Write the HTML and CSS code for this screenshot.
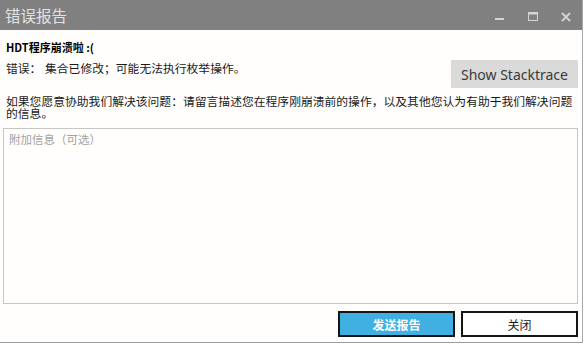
FILE: index.html
```html
<!DOCTYPE html>
<html lang="zh-CN">
<head>
    <meta charset="UTF-8">
    <meta name="viewport" content="width=device-width, initial-scale=1.0">
    <title>错误报告</title>
    <link rel="stylesheet" href="styles.css">
</head>
<body>
    <div class="window">
        <div class="titlebar">
            <span class="title">错误报告</span>
            <div class="controls">
                <span class="ctrl">
                    <svg width="10" height="10" viewBox="0 0 10 10"><rect x="0" y="6" width="9" height="2" fill="#d4d4d4"/></svg>
                </span>
                <span class="ctrl">
                    <svg width="10" height="10" viewBox="0 0 10 10"><rect x="0.5" y="0.5" width="9" height="8" fill="none" stroke="#d4d4d4"/><rect x="0.5" y="0.5" width="9" height="2" fill="#d4d4d4"/></svg>
                </span>
                <span class="ctrl">
                    <svg width="10" height="10" viewBox="0 0 10 10"><path d="M1 1 L9 9 M9 1 L1 9" stroke="#d4d4d4" stroke-width="1.8"/></svg>
                </span>
            </div>
        </div>

        <div class="content">
            <h1 class="headline">HDT程序崩溃啦 :(</h1>

            <div class="error-row">
                <p class="error-text"><span class="error-label">错误：</span>集合已修改；可能无法执行枚举操作。</p>
                <button class="stack-btn" type="button">Show Stacktrace</button>
            </div>

            <p class="hint">如果您愿意协助我们解决该问题：请留言描述您在程序刚崩溃前的操作，以及其他您认为有助于我们解决问题的信息。</p>

            <textarea class="notes" placeholder="附加信息（可选）"></textarea>

            <div class="actions">
                <button class="btn btn-send" type="button">发送报告</button>
                <button class="btn btn-close" type="button">关闭</button>
            </div>
        </div>
    </div>
</body>
</html>
```

FILE: styles.css
```css
body {
    margin: 0;
    padding: 0;
    background-color: #ffffff;
    font-family: "Noto Sans CJK SC", "Noto Sans", sans-serif;
    color: #1a1a1a;
}

.window {
    width: 582px;
    height: 342px;
    background-color: #fffefc;
    border-right: 1px solid #a8a8a8;
    border-bottom: 1px solid #9c9c9c;
    display: flex;
    flex-direction: column;
}

.titlebar {
    height: 30px;
    background-color: #808080;
    display: flex;
    align-items: center;
    justify-content: space-between;
    padding-left: 5px;
}

.title {
    color: #e2e2e2;
    font-size: 15.5px;
    line-height: 30px;
}

.controls {
    display: flex;
    align-items: center;
    padding-right: 11px;
    gap: 23px;
}

.ctrl {
    display: flex;
    width: 10px;
    height: 10px;
    margin-top: 3px;
}

.content {
    flex: 1;
    display: flex;
    flex-direction: column;
    padding: 0 4px 0 3px;
}

.headline {
    margin: 9px 0 0 3px;
    font-size: 11px;
    line-height: 16px;
    font-weight: bold;
    color: #000;
}

.error-row {
    display: flex;
    justify-content: space-between;
    align-items: flex-start;
    margin-top: 5px;
}

.error-text {
    margin: 2px 0 0 3px;
    font-size: 11.8px;
    line-height: 12px;
}

.error-label {
    display: inline-block;
    width: 39px;
}

.stack-btn {
    width: 127px;
    height: 28px;
    border: none;
    background-color: #dadada;
    color: #3a3a3a;
    font-family: "Noto Sans", "Open Sans", sans-serif;
    font-size: 14px;
    padding: 0;
}

.hint {
    margin: 7px 0 0 3px;
    width: 571px;
    font-size: 11.8px;
    line-height: 12px;
}

.notes {
    margin-top: 9px;
    height: 176px;
    box-sizing: border-box;
    border: 1px solid #c6c6c6;
    background-color: #fffefc;
    resize: none;
    padding: 2px 5px;
    font-family: "Noto Sans CJK SC", sans-serif;
    font-size: 11.5px;
}

.notes::placeholder {
    color: #a2a2a2;
}

.actions {
    display: flex;
    justify-content: flex-end;
    gap: 6px;
    margin-top: 7px;
}

.btn {
    width: 117px;
    height: 26px;
    border: 2px solid #151515;
    font-family: "Noto Sans CJK SC", sans-serif;
    font-size: 12px;
    padding: 0;
}

.btn-send {
    background-color: #3fb0e1;
    color: #ffffff;
    font-weight: bold;
}

.btn-close {
    background-color: #ffffff;
    color: #1a1a1a;
}
```
